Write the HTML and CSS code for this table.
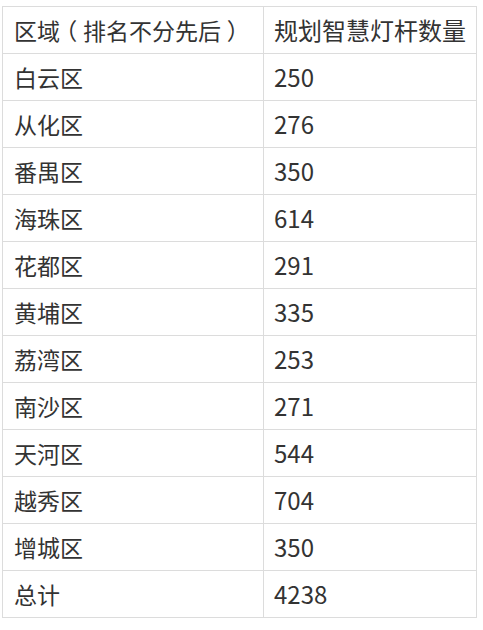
FILE: index.html
```html
<!DOCTYPE html>
<html lang="zh-CN">
<head>
<meta charset="utf-8">
<link rel="stylesheet" href="styles.css">
</head>
<body>
<table class="data">
  <colgroup><col class="c1"><col class="c2"></colgroup>
  <tr><td>区域<span class="pn">（</span>排名不分先后<span class="pn">）</span></td><td>规划智慧灯杆数量</td></tr>
  <tr><td>白云区</td><td>250</td></tr>
  <tr><td>从化区</td><td>276</td></tr>
  <tr><td>番禺区</td><td>350</td></tr>
  <tr><td>海珠区</td><td>614</td></tr>
  <tr><td>花都区</td><td>291</td></tr>
  <tr><td>黄埔区</td><td>335</td></tr>
  <tr><td>荔湾区</td><td>253</td></tr>
  <tr><td>南沙区</td><td>271</td></tr>
  <tr><td>天河区</td><td>544</td></tr>
  <tr><td>越秀区</td><td>704</td></tr>
  <tr><td>增城区</td><td>350</td></tr>
  <tr><td>总计</td><td>4238</td></tr>
</table>
</body>
</html>
```
FILE: styles.css
```css
html, body {
  margin: 0;
  padding: 0;
  background: #ffffff;
}
body {
  padding: 6px 0 0 2px;
}
.data {
  border-collapse: collapse;
  table-layout: fixed;
  width: 474px;
  font-family: "Noto Sans CJK SC", "Noto Sans", sans-serif;
  font-size: 23px;
  color: #333333;
}
.c1 { width: 261px; }
.c2 { width: 213px; }
.data td {
  border: 1px solid #dcdcdc;
  height: 46px;
  padding: 0 0 0 11px;
  box-sizing: border-box;
  line-height: 46px;
  white-space: nowrap;
  overflow: hidden;
}
.data td + td {
  padding-left: 10px;
  font-size: 24px;
}
.pn {
  display: inline-block;
  width: 1em;
  text-align: center;
  font-feature-settings: "halt";
}
```
